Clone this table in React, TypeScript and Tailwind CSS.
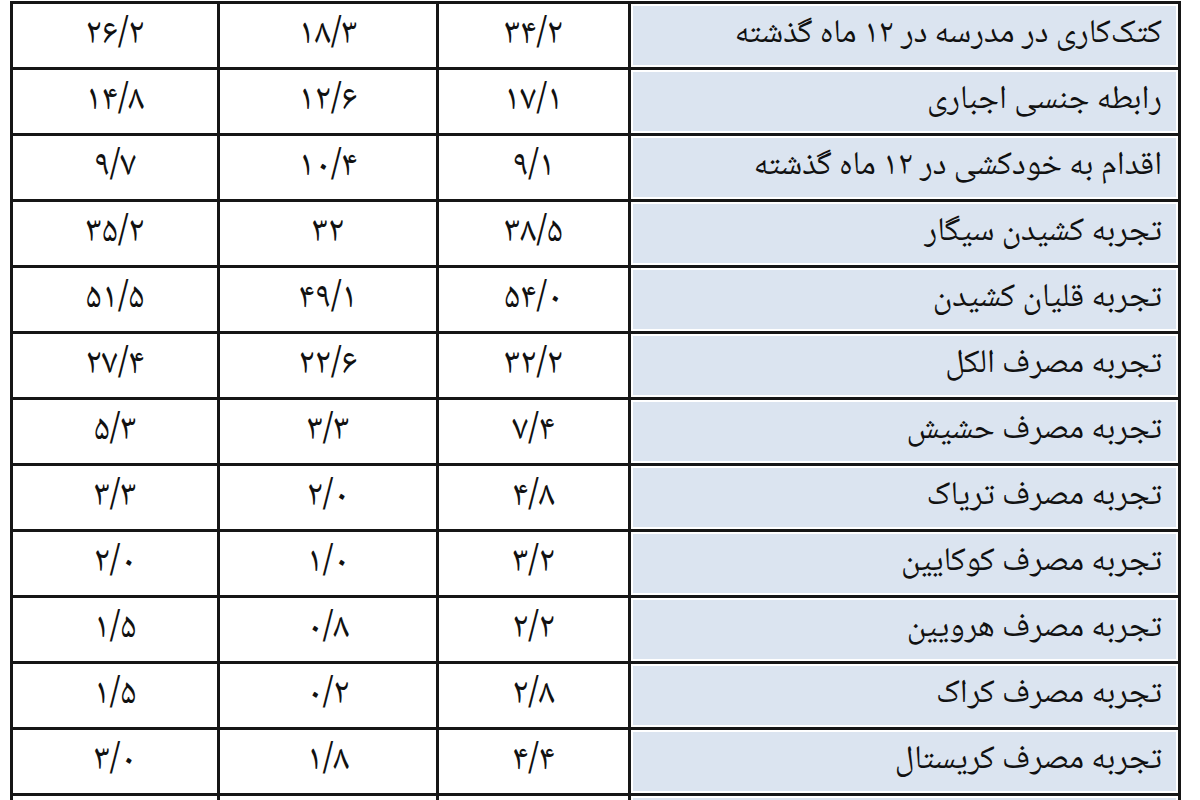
const rows: [string, string, string, string][] = [
  ['کتک‌کاری در مدرسه در ۱۲ ماه گذشته', '۳۴/۲', '۱۸/۳', '۲۶/۲'],
  ['رابطه جنسی اجباری', '۱۷/۱', '۱۲/۶', '۱۴/۸'],
  ['اقدام به خودکشی در ۱۲ ماه گذشته', '۹/۱', '۱۰/۴', '۹/۷'],
  ['تجربه کشیدن سیگار', '۳۸/۵', '۳۲', '۳۵/۲'],
  ['تجربه قلیان کشیدن', '۵۴/۰', '۴۹/۱', '۵۱/۵'],
  ['تجربه مصرف الکل', '۳۲/۲', '۲۲/۶', '۲۷/۴'],
  ['تجربه مصرف حشیش', '۷/۴', '۳/۳', '۵/۳'],
  ['تجربه مصرف تریاک', '۴/۸', '۲/۰', '۳/۳'],
  ['تجربه مصرف کوکایین', '۳/۲', '۱/۰', '۲/۰'],
  ['تجربه مصرف هرویین', '۲/۲', '۰/۸', '۱/۵'],
  ['تجربه مصرف کراک', '۲/۸', '۰/۲', '۱/۵'],
  ['تجربه مصرف کریستال', '۴/۴', '۱/۸', '۳/۰'],
];

const font = { fontFamily: '"Noto Naskh Arabic", "Noto Sans Arabic", "DejaVu Sans", sans-serif' };

export default function App() {
  return (
    <div className="w-[1200px] h-[800px] overflow-hidden bg-white" style={font}>
      <table className="ml-[10px] mt-px w-[1171px] table-fixed border-collapse text-[#111]">
        <colgroup>
          <col className="w-[207px]" />
          <col className="w-[219px]" />
          <col className="w-[192px]" />
          <col />
        </colgroup>
        <tbody>
          {rows.map(([label, a, b, c]) => (
            <tr key={label} className="h-[66px]">
              <td className="border-[3px] border-[#161616] text-center text-[36px] leading-none" dir="ltr">{c}</td>
              <td className="border-[3px] border-[#161616] text-center text-[36px] leading-none" dir="ltr">{b}</td>
              <td className="border-[3px] border-[#161616] text-center text-[36px] leading-none" dir="ltr">{a}</td>
              <td className="border-[3px] border-[#161616] p-[2px]">
                <div className="flex h-[59px] items-center justify-start bg-[#dbe4f0] pr-[14px] text-[33px] leading-none" dir="rtl">
                  {label}
                </div>
              </td>
            </tr>
          ))}
          <tr className="h-[66px]">
            <td className="border-[3px] border-[#161616]" />
            <td className="border-[3px] border-[#161616]" />
            <td className="border-[3px] border-[#161616]" />
            <td className="border-[3px] border-[#161616] p-[2px]">
              <div className="h-[59px] bg-[#dbe4f0]" />
            </td>
          </tr>
        </tbody>
      </table>
    </div>
  );
}
